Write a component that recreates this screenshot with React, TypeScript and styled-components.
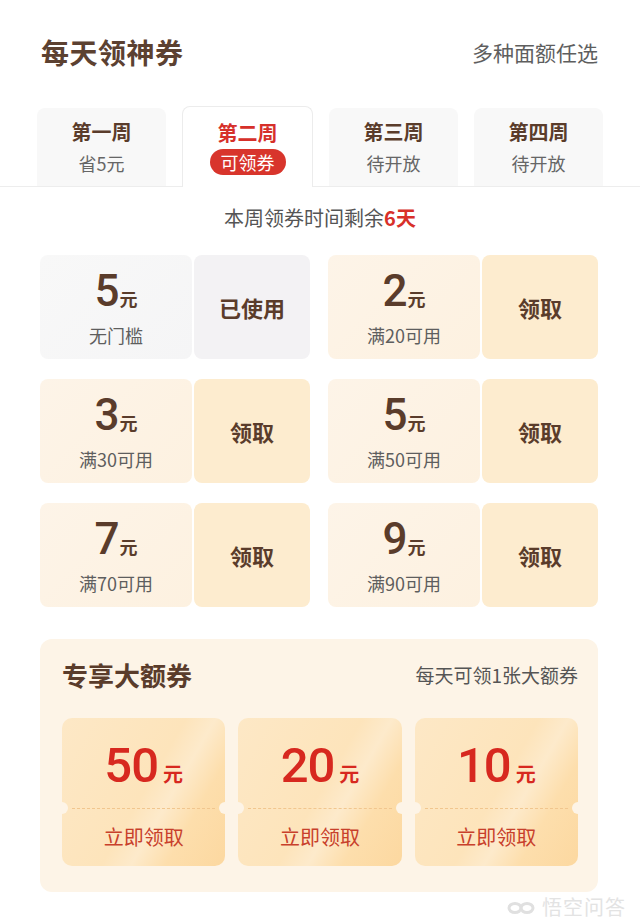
import styled, { createGlobalStyle } from 'styled-components';

const GlobalStyle = createGlobalStyle`
  html, body {
    margin: 0;
    padding: 0;
    background: #ffffff;
  }
  body {
    font-family: "Noto Sans CJK SC", "Noto Sans", sans-serif;
    color: #5a3c2b;
  }
`;

const Page = styled.div`
  width: 640px;
  min-height: 921px;
  background: #fff;
  display: flex;
  flex-direction: column;
  overflow: hidden;
`;

const Header = styled.header`
  height: 104px;
  padding: 0 42px 0 41px;
  display: flex;
  align-items: center;
  justify-content: space-between;
`;

const Title = styled.h1`
  margin: 0;
  font-size: 28px;
  font-weight: 700;
  color: #5c4131;
  letter-spacing: 0.5px;
`;

const HeaderNote = styled.span`
  font-size: 21px;
  color: #5e5e5e;
`;

const TabBar = styled.div`
  padding: 0 37px;
  display: flex;
  align-items: flex-end;
  gap: 16px;
  height: 82px;
  border-bottom: 1px solid #ededed;
`;

const Tab = styled.div<{ $active?: boolean }>`
  flex: 1;
  height: ${(p) => (p.$active ? '81px' : '78px')};
  margin-bottom: ${(p) => (p.$active ? '-1px' : '0')};
  box-sizing: border-box;
  background: ${(p) => (p.$active ? '#ffffff' : '#f8f8f8')};
  border: ${(p) => (p.$active ? '1px solid #ececec' : 'none')};
  border-bottom: none;
  border-radius: 8px 8px 0 0;
  display: flex;
  flex-direction: column;
  align-items: center;
  justify-content: center;
  gap: ${(p) => (p.$active ? '3px' : '6px')};
`;

const TabName = styled.div<{ $active?: boolean }>`
  font-size: 20px;
  font-weight: 700;
  line-height: 26px;
  color: ${(p) => (p.$active ? '#d6302a' : '#5a3c2b')};
`;

const TabSub = styled.div`
  font-size: 18px;
  line-height: 24px;
  color: #666;
`;

const TabPill = styled.div`
  font-size: 18px;
  line-height: 26px;
  color: #fff;
  background: #d8352c;
  border-radius: 13px;
  padding: 0 11px;
`;

const Countdown = styled.div`
  text-align: center;
  font-size: 20px;
  line-height: 28px;
  color: #555;
  padding: 17px 0 23px;
`;

const Highlight = styled.span`
  color: #d8302a;
  font-weight: 700;
`;

const CouponGrid = styled.div`
  padding: 0 42px 0 40px;
  display: grid;
  grid-template-columns: 1fr 1fr;
  column-gap: 18px;
  row-gap: 20px;
`;

const Coupon = styled.div`
  height: 104px;
  display: flex;
  gap: 2px;
`;

const CouponInfo = styled.div<{ $used?: boolean }>`
  width: 152px;
  border-radius: 8px;
  background: ${(p) =>
    p.$used
      ? 'linear-gradient(135deg, #f8f8f8, #f5f5f6)'
      : 'linear-gradient(135deg, #fdf4e8, #fdf1e0)'};
  display: flex;
  flex-direction: column;
  align-items: center;
  justify-content: center;
  gap: 2px;
`;

const Amount = styled.div`
  display: flex;
  align-items: baseline;
  line-height: 46px;
  color: #5a3c2b;
`;

const AmountNum = styled.span`
  font-family: "Roboto", "Liberation Sans", sans-serif;
  font-size: 44px;
  font-weight: 500;
  letter-spacing: -1px;
`;

const AmountUnit = styled.span`
  font-size: 18px;
  font-weight: 700;
  margin-left: 1px;
`;

const Condition = styled.div`
  font-size: 18px;
  line-height: 24px;
  color: #5e5e5e;
`;

const CouponAction = styled.div<{ $used?: boolean }>`
  flex: 1;
  border-radius: 8px;
  background: ${(p) => (p.$used ? '#f3f2f4' : '#fdeccf')};
  display: flex;
  align-items: center;
  justify-content: center;
  font-size: 22px;
  font-weight: 700;
  color: #5a3c2b;
`;

const BigSection = styled.section`
  margin: 32px 42px 0 40px;
  padding: 17px 20px 26px 22px;
  background: #fdf4e7;
  border-radius: 12px;
  display: flex;
  flex-direction: column;
  gap: 26px;
`;

const BigHeader = styled.div`
  height: 36px;
  display: flex;
  align-items: center;
  justify-content: space-between;
`;

const BigTitle = styled.h2`
  margin: 0;
  font-size: 26px;
  font-weight: 700;
  color: #5a3c2b;
`;

const BigNote = styled.span`
  font-size: 19px;
  color: #555;
`;

const BigRow = styled.div`
  display: grid;
  grid-template-columns: repeat(3, 1fr);
  gap: 13px;
`;

const BigCard = styled.div`
  position: relative;
  height: 148px;
  border-radius: 10px;
  background: linear-gradient(
    120deg,
    #fde8c6 0%,
    #fde4bb 50%,
    #fdeacb 62%,
    #fddeac 76%,
    #fcd8a0 100%
  );
  display: flex;
  flex-direction: column;

  &::before,
  &::after {
    content: '';
    position: absolute;
    top: 84px;
    width: 12px;
    height: 12px;
    border-radius: 50%;
    background: #fdf4e7;
  }
  &::before {
    left: -6px;
  }
  &::after {
    right: -6px;
  }
`;

const BigAmount = styled.div`
  height: 90px;
  display: flex;
  align-items: baseline;
  justify-content: center;
  color: #d7281f;
  padding-top: 20px;
  box-sizing: border-box;
  line-height: 56px;
`;

const BigNum = styled.span`
  font-family: "Roboto", "Liberation Sans", sans-serif;
  font-size: 49px;
  font-weight: 500;
  letter-spacing: -1px;
`;

const BigUnit = styled.span`
  font-size: 20px;
  font-weight: 700;
  margin-left: 5px;
`;

const BigAction = styled.div`
  flex: 1;
  margin: 0 10px;
  border-top: 1px dashed #f1c68e;
  display: flex;
  align-items: center;
  justify-content: center;
  font-size: 20px;
  color: #c8402b;
  padding-bottom: 2px;
`;

const Watermark = styled.div`
  display: flex;
  justify-content: flex-end;
  align-items: center;
  gap: 6px;
  padding: 0 14px 0 0;
  height: 30px;
  font-size: 20px;
  line-height: 24px;
  color: #e3e3e3;
  letter-spacing: 1px;
`;

const weeks = [
  { name: '第一周', sub: '省5元' },
  { name: '第二周', sub: '可领券', active: true },
  { name: '第三周', sub: '待开放' },
  { name: '第四周', sub: '待开放' },
];

const coupons = [
  { amount: 5, cond: '无门槛', used: true },
  { amount: 2, cond: '满20可用' },
  { amount: 3, cond: '满30可用' },
  { amount: 5, cond: '满50可用' },
  { amount: 7, cond: '满70可用' },
  { amount: 9, cond: '满90可用' },
];

const bigCoupons = [50, 20, 10];

export default function App() {
  return (
    <Page>
      <GlobalStyle />
      <Header>
        <Title>每天领神券</Title>
        <HeaderNote>多种面额任选</HeaderNote>
      </Header>

      <TabBar>
        {weeks.map((w) => (
          <Tab key={w.name} $active={w.active}>
            <TabName $active={w.active}>{w.name}</TabName>
            {w.active ? <TabPill>{w.sub}</TabPill> : <TabSub>{w.sub}</TabSub>}
          </Tab>
        ))}
      </TabBar>

      <Countdown>
        本周领券时间剩余<Highlight>6天</Highlight>
      </Countdown>

      <CouponGrid>
        {coupons.map((c, i) => (
          <Coupon key={i}>
            <CouponInfo $used={c.used}>
              <Amount>
                <AmountNum>{c.amount}</AmountNum>
                <AmountUnit>元</AmountUnit>
              </Amount>
              <Condition>{c.cond}</Condition>
            </CouponInfo>
            <CouponAction $used={c.used}>{c.used ? '已使用' : '领取'}</CouponAction>
          </Coupon>
        ))}
      </CouponGrid>

      <BigSection>
        <BigHeader>
          <BigTitle>专享大额券</BigTitle>
          <BigNote>每天可领1张大额券</BigNote>
        </BigHeader>
        <BigRow>
          {bigCoupons.map((v) => (
            <BigCard key={v}>
              <BigAmount>
                <BigNum>{v}</BigNum>
                <BigUnit>元</BigUnit>
              </BigAmount>
              <BigAction>立即领取</BigAction>
            </BigCard>
          ))}
        </BigRow>
      </BigSection>

      <Watermark>
        <svg width="30" height="18" viewBox="0 0 30 18" fill="none" stroke="#e0e0e0" strokeWidth="3">
          <ellipse cx="9" cy="10" rx="6" ry="4.5" />
          <ellipse cx="21" cy="10" rx="6" ry="4.5" />
        </svg>
        <span>悟空问答</span>
      </Watermark>
    </Page>
  );
}
